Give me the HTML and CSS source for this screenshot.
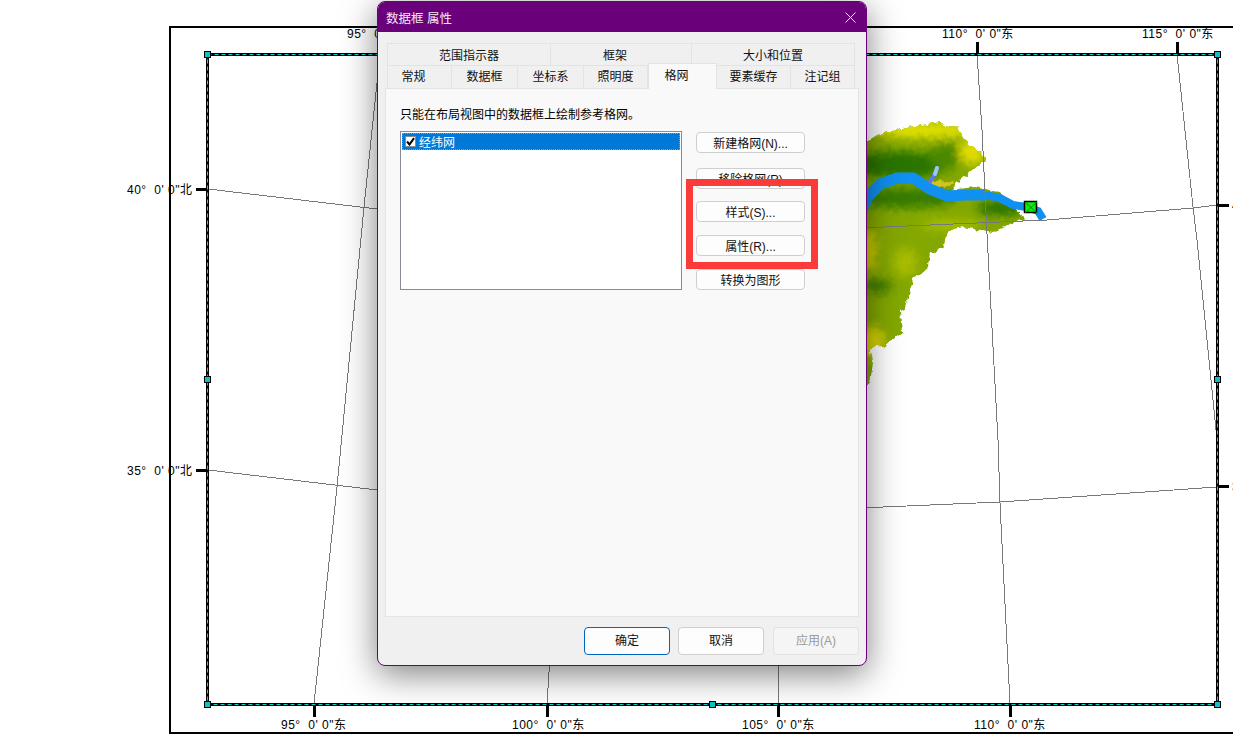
FILE: index.html
```html
<!DOCTYPE html>
<html lang="zh-CN">
<head>
    <meta charset="UTF-8">
    <title>数据框 属性</title>
    <link rel="stylesheet" href="styles.css">
</head>
<body>
<div class="page">

    <!-- Layout view behind the dialog -->
    <svg class="map" width="1233" height="751" viewBox="0 0 1233 751">
        <defs>
            <clipPath id="terrainClip">
                <path d="M860 142 L887 132 L913 127 L933 123 L957 127 L967 143 L982 152 L985 160 L973 170 L960 180 L950 190 L975 187 L1000 192 L1025 219 L1013 223 L993 232 L963 227 L950 230 L943 248 L930 253 L928 267 L913 280 L905 307 L900 310 L902 333 L883 347 L870 348 L873 360 L870 385 L860 385 Z"/>
            </clipPath>
            <filter id="blurBig" x="-50%" y="-50%" width="200%" height="200%">
                <feGaussianBlur stdDeviation="5"/>
            </filter>
            <filter id="rough" x="-5%" y="-5%" width="110%" height="110%">
                <feTurbulence type="fractalNoise" baseFrequency="0.16" numOctaves="2" seed="4"/>
                <feDisplacementMap in="SourceGraphic" scale="7" xChannelSelector="R" yChannelSelector="G"/>
            </filter>
        </defs>

        <!-- Page outline -->
        <path class="page-frame" d="M1240 27 H170 V733 H1240"/>

        <!-- DEM -->
        <g filter="url(#rough)">
            <g clip-path="url(#terrainClip)">
                <rect x="850" y="110" width="200" height="290" fill="#84a800"/>
                <g filter="url(#blurBig)">
                    <ellipse cx="925" cy="130" rx="55" ry="8" fill="#e2e000"/>
                    <ellipse cx="972" cy="152" rx="13" ry="13" fill="#e0dc00"/>
                    <ellipse cx="900" cy="165" rx="50" ry="14" fill="#2a7400"/>
                    <ellipse cx="945" cy="157" rx="14" ry="14" fill="#4c8800"/>
                    <ellipse cx="905" cy="198" rx="50" ry="10" fill="#367a00"/>
                    <ellipse cx="1000" cy="208" rx="24" ry="8" fill="#2f7600"/>
                    <ellipse cx="950" cy="225" rx="30" ry="5" fill="#a8c000"/>
                    <ellipse cx="868" cy="250" rx="8" ry="22" fill="#d0d000"/>
                    <ellipse cx="905" cy="262" rx="12" ry="14" fill="#a8bc00"/>
                    <ellipse cx="878" cy="286" rx="14" ry="7" fill="#3c7c00"/>
                    <ellipse cx="872" cy="342" rx="12" ry="16" fill="#d8d400"/>
                </g>
                <ellipse cx="938" cy="184" rx="15" ry="3" fill="#d0c420"/>
            </g>
        </g>
        <path class="river" d="M862 210 L868 197 L880 184 L897 178 L913 178 L930 189 L947 196 L967 195 L985 195"/>
        <path class="river-end" d="M985 195 L1000 198 L1013 205 L1027 207 L1038 211 L1043 219"/>
        <path class="lake" d="M930 182 L934 175"/>
        <path class="lake-light" d="M935 174 L937 168"/>
        <g class="outlet">
            <rect x="1024.5" y="201.5" width="12" height="11"/>
            <path d="M1025 202 L1037 213 M1037 202 L1025 213"/>
        </g>

        <!-- Graticule -->
        <g class="grid-lines">
            <path d="M386 54 L377 83 L364 207 L337 487 L314 704"/>
            <path d="M551 640 L547 704"/>
            <path d="M779 640 L778 704"/>
            <path d="M977 54 L982 130 L987 234 L998 440 L1000 503 L1010 704"/>
            <path d="M1177 54 L1193 207 L1197 240 L1217 440"/>
            <path d="M208 189 L377 209"/>
            <path d="M860 228 L1047 220 L1193 208 L1217 205"/>
            <path d="M208 470 L377 490"/>
            <path d="M860 508 L1000 502 L1217 487"/>
        </g>

        <!-- Ticks -->
        <path class="ticks" d="M196 189.5 H208 M196 470.5 H208 M1217 205.5 H1229 M1217 486.5 H1229 M314.5 704 V717 M547.5 704 V717 M778.5 704 V717 M1010.5 704 V717 M977.5 42 V54 M1177.5 42 V54"/>

        <!-- Selected data frame -->
        <rect class="frame-line" x="207.5" y="54.5" width="1010" height="650"/>
        <rect class="frame-dash" x="207.5" y="54.5" width="1010" height="650"/>
        <g class="handles">
            <rect x="204.5" y="51.5" width="6" height="6"/>
            <rect x="1214.5" y="51.5" width="6" height="6"/>
            <rect x="204.5" y="376.5" width="6" height="6"/>
            <rect x="1214.5" y="376.5" width="6" height="6"/>
            <rect x="204.5" y="701.5" width="6" height="6"/>
            <rect x="709.5" y="701.5" width="6" height="6"/>
            <rect x="1214.5" y="701.5" width="6" height="6"/>
        </g>

        <!-- Labels -->
        <g class="labels">
            <text x="347" y="38">95°  0' 0"东</text>
            <text x="942" y="38">110°  0' 0"东</text>
            <text x="1142" y="38">115°  0' 0"东</text>
            <text x="127" y="194">40°  0' 0"北</text>
            <text x="127" y="475">35°  0' 0"北</text>
            <text x="1232" y="210">40°</text>
            <text x="1232" y="491">35°</text>
            <text x="281" y="729">95°  0' 0"东</text>
            <text x="512" y="729">100°  0' 0"东</text>
            <text x="742" y="729">105°  0' 0"东</text>
            <text x="974" y="729">110°  0' 0"东</text>
        </g>
    </svg>

    <!-- Properties dialog -->
    <div class="dialog">
        <div class="titlebar">
            <span class="title">数据框 属性</span>
            <svg class="close-icon" width="11" height="11" viewBox="0 0 11 11">
                <path d="M0.5 0.5 L10.5 10.5 M10.5 0.5 L0.5 10.5"/>
            </svg>
        </div>

        <div class="dialog-body">
            <div class="tabs">
                <div class="tab-row tab-row-back">
                    <div class="tab">范围指示器</div>
                    <div class="tab tab-shift-left">框架</div>
                    <div class="tab">大小和位置</div>
                </div>
                <div class="tab-row tab-row-front">
                    <div class="tab tab-shift-left">常规</div>
                    <div class="tab">数据框</div>
                    <div class="tab">坐标系</div>
                    <div class="tab">照明度</div>
                    <div class="tab active tab-shift-left">格网</div>
                    <div class="tab">要素缓存</div>
                    <div class="tab">注记组</div>
                </div>
            </div>

            <div class="panel">
                <p class="hint">只能在布局视图中的数据框上绘制参考格网。</p>
                <div class="grid-settings">
                    <div class="list">
                        <div class="list-item">
                            <span class="checkbox">
                                <svg width="9" height="9" viewBox="0 0 9 9"><path d="M1 4.5 L3.5 7.5 L8 1.2"/></svg>
                            </span>
                            <span>经纬网</span>
                        </div>
                    </div>
                    <div class="side-buttons">
                        <button class="btn btn-new">新建格网(N)...</button>
                        <button class="btn btn-remove">移除格网(R)</button>
                        <button class="btn">样式(S)...</button>
                        <button class="btn">属性(R)...</button>
                        <button class="btn">转换为图形</button>
                    </div>
                </div>
            </div>

            <div class="footer">
                <button class="btn btn-footer btn-default">确定</button>
                <button class="btn btn-footer">取消</button>
                <button class="btn btn-footer btn-disabled">应用(A)</button>
            </div>
        </div>
    </div>

    <!-- Annotation drawn over the screenshot -->
    <div class="red-box"></div>

</div>
</body>
</html>
```

FILE: styles.css
```css
/* Global styles */
html, body {
    margin: 0;
    padding: 0;
    background-color: #ffffff;
}

.page {
    position: relative;
    width: 1233px;
    height: 751px;
    overflow: hidden;
    font-family: "Liberation Sans", "Noto Sans CJK SC", sans-serif;
    font-size: 12px;
    color: #000;
}

/* Map canvas */
.map {
    position: absolute;
    left: 0;
    top: 0;
}

.page-frame {
    fill: none;
    stroke: #000;
    stroke-width: 2;
}

.river {
    fill: none;
    stroke: #1090f0;
    stroke-width: 11;
}

.river-end {
    fill: none;
    stroke: #1090f0;
    stroke-width: 8;
}

.lake {
    fill: none;
    stroke: #5a78e8;
    stroke-width: 4;
    stroke-linecap: round;
}

.lake-light {
    fill: none;
    stroke: #98c4ff;
    stroke-width: 4;
    stroke-linecap: round;
}

.outlet rect {
    fill: #10ee10;
    stroke: #000;
    stroke-width: 1.5;
}

.outlet path {
    fill: none;
    stroke: #0a8a0a;
    stroke-width: 1;
}

.grid-lines path {
    fill: none;
    stroke: #787878;
    stroke-width: 1;
    shape-rendering: crispEdges;
}

.ticks {
    fill: none;
    stroke: #000;
    stroke-width: 3;
}

.frame-line {
    fill: none;
    stroke: #000;
    stroke-width: 3;
}

.frame-dash {
    fill: none;
    stroke: #10d0d0;
    stroke-width: 1;
    stroke-dasharray: 4 3;
}

.handles rect {
    fill: #10c0c8;
    stroke: #000;
    stroke-width: 1;
}

.labels text {
    font-family: "Liberation Sans", "Noto Sans CJK SC", sans-serif;
    font-size: 12px;
    letter-spacing: 0.5px;
    fill: #000;
    white-space: pre;
}

/* Dialog window */
.dialog {
    position: absolute;
    left: 377px;
    top: 1px;
    width: 490px;
    height: 665px;
    box-sizing: border-box;
    display: flex;
    flex-direction: column;
    background-color: #f0f0f0;
    border: 1px solid #6a007a;
    border-radius: 8px;
    box-shadow: 0 8px 34px rgba(0, 0, 0, 0.5);
    overflow: hidden;
}

.titlebar {
    flex: 0 0 30px;
    display: flex;
    justify-content: space-between;
    align-items: center;
    padding: 0 10px 0 8px;
    background-color: #6a007a;
    color: #f4e8f6;
    font-size: 12.5px;
}

.close-icon path {
    fill: none;
    stroke: #f4ecf6;
    stroke-width: 1;
}

.dialog-body {
    flex: 1;
    display: flex;
    flex-direction: column;
    padding: 11px 7px 0;
    min-height: 0;
}

/* Tabs */
.tabs {
    padding: 0 2px;
    position: relative;
    z-index: 1;
}

.tab-row {
    display: grid;
    height: 22px;
}

.tab-row-back {
    grid-template-columns: 164px 141px 163px;
}

.tab-row-front {
    grid-template-columns: 65px 66px 66px 64px 69px 74px 64px;
    height: 23px;
}

.tab {
    display: flex;
    justify-content: center;
    align-items: center;
    box-sizing: border-box;
    padding-bottom: 1px;
    background-color: #f0f0f0;
    border: 1px solid #e3e3e3;
    border-bottom: none;
    border-left: none;
    color: #111;
}

.tab:first-child {
    border-left: 1px solid #e3e3e3;
}

.tab-shift-left {
    padding-right: 12px;
}

.tab-row-front .tab {
    border-bottom: 1px solid #e3e3e3;
    padding-bottom: 3px;
}

.tab-row-front .tab.active {
    background-color: #f9f9f9;
    border: 1px solid #e3e3e3;
    border-bottom: none;
    margin-top: -2px;
    height: 26px;
    align-items: flex-start;
    padding-top: 2px;
    padding-bottom: 0;
    position: relative;
}

.panel {
    flex: 1;
    box-sizing: border-box;
    padding: 18px 14px 0;
    background-color: #f9f9f9;
    border: 1px solid #e5e5e5;
    min-height: 0;
}

.hint {
    margin: 0 0 7px;
    line-height: 17px;
}

.grid-settings {
    display: flex;
    gap: 14px;
}

.list {
    width: 282px;
    height: 159px;
    box-sizing: border-box;
    padding: 1px;
    background-color: #ffffff;
    border: 1px solid #8a8a96;
}

.list-item {
    display: flex;
    align-items: center;
    gap: 3px;
    height: 17px;
    padding-left: 3px;
    background-color: #0078d7;
    color: #ffffff;
    outline: 1px dotted #e88a20;
    outline-offset: -1px;
}

.checkbox {
    display: flex;
    justify-content: center;
    align-items: center;
    width: 11px;
    height: 11px;
    box-sizing: border-box;
    background-color: #ffffff;
    border: 1px solid #8a8a8a;
}

.checkbox path {
    fill: none;
    stroke: #000;
    stroke-width: 2;
}

/* Buttons */
.btn {
    display: block;
    padding: 0 0 1px;
    font-family: inherit;
    font-size: 12px;
    color: #111;
    background-color: #fdfdfd;
    border: 1px solid #cfcfcf;
    border-radius: 4px;
}

.side-buttons {
    display: flex;
    flex-direction: column;
    gap: 13px;
    padding-top: 1px;
}

.side-buttons .btn {
    width: 109px;
    height: 21px;
}

.side-buttons .btn-new {
    margin-bottom: 2px;
}

.side-buttons .btn-remove {
    margin-bottom: -1px;
}

.footer {
    flex: 0 0 48px;
    display: flex;
    justify-content: flex-end;
    align-items: flex-start;
    gap: 8px;
    padding-top: 10px;
    box-sizing: border-box;
}

.btn-footer {
    width: 86px;
    height: 28px;
    padding-bottom: 3px;
}

.btn-default {
    border-color: #0067c0;
}

.btn-disabled {
    margin-left: 1px;
    color: #9a9a9a;
    background-color: #f5f5f5;
    border-color: #e2e2e2;
}

/* Red highlight box */
.red-box {
    position: absolute;
    left: 686px;
    top: 179px;
    width: 132px;
    height: 90px;
    box-sizing: border-box;
    border: 7px solid #fb3a3a;
}
```
